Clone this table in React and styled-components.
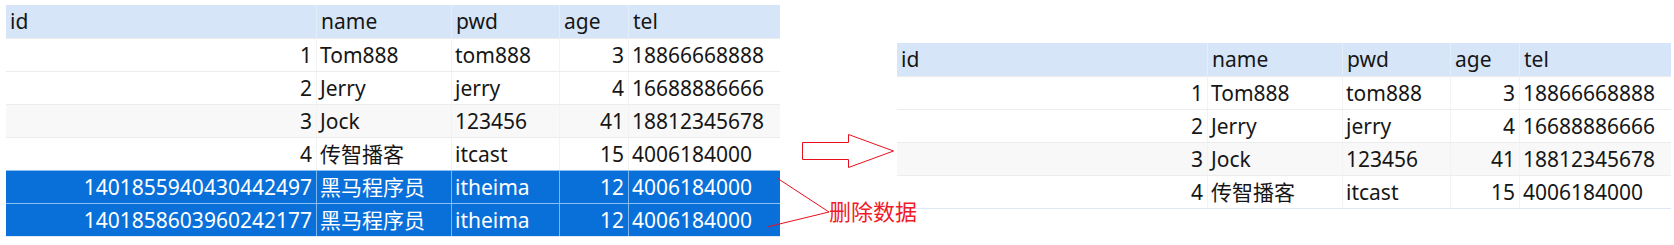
import React from "react";
import styled, { createGlobalStyle } from "styled-components";

const GlobalStyle = createGlobalStyle`
  html, body {
    margin: 0;
    padding: 0;
    background: #ffffff;
  }
  body {
    font-family: "Noto Sans", "Noto Sans CJK SC", sans-serif;
  }
`;

const COLS = [311, 135, 108, 69, 151];
const HEAD = ["id", "name", "pwd", "age", "tel"];
// which columns are right aligned (numbers)
const RIGHT = [true, false, false, true, false];

const baseRows = [
  ["1", "Tom888", "tom888", "3", "18866668888"],
  ["2", "Jerry", "jerry", "4", "16688886666"],
  ["3", "Jock", "123456", "41", "18812345678"],
  ["4", "传智播客", "itcast", "15", "4006184000"],
];

const deletedRows = [
  ["1401855940430442497", "黑马程序员", "itheima", "12", "4006184000"],
  ["1401858603960242177", "黑马程序员", "itheima", "12", "4006184000"],
];

const DataTable = ({ rows, selectedFrom }) => (
  <Table>
    <HeadRow>
      {HEAD.map((h, i) => (
        <HeadCell key={h} $w={COLS[i]}>
          {h}
        </HeadCell>
      ))}
    </HeadRow>
    {rows.map((r, ri) => {
      const selected = selectedFrom != null && ri >= selectedFrom;
      return (
        <Row key={ri} $selected={selected} $shade={ri === 2}>
          {r.map((c, ci) => (
            <Cell
              key={ci}
              $w={COLS[ci]}
              $right={RIGHT[ci]}
              $selected={selected}
            >
              {c}
            </Cell>
          ))}
        </Row>
      );
    })}
  </Table>
);

const App = () => {
  return (
    <>
      <GlobalStyle />
      <Page>
        <DataTable rows={[...baseRows, ...deletedRows]} selectedFrom={4} />
        <Spacer />
        <RightWrap>
          <DataTable rows={baseRows} />
        </RightWrap>

        <Overlay width="1674" height="245" viewBox="0 0 1674 245">
          <polygon
            points="802.5,142.5 848.5,142.5 848.5,134.5 893.5,151 848.5,167.5 848.5,159.5 802.5,159.5"
            fill="none"
            stroke="#e8101c"
            strokeWidth="1"
          />
          <line x1="777" y1="178" x2="829" y2="212" stroke="#e8101c" strokeWidth="1" />
          <line x1="767" y1="227" x2="829" y2="212" stroke="#e8101c" strokeWidth="1" />
        </Overlay>
        <Label>删除数据</Label>
      </Page>
    </>
  );
};

export default App;

// page
const Page = styled.div`
  position: relative;
  width: 1674px;
  height: 245px;
  display: flex;
  align-items: flex-start;
  padding: 5px 0 0 6px;
  box-sizing: border-box;
  overflow: hidden;
`;

const Spacer = styled.div`
  width: 117px;
  flex-shrink: 0;
`;

const RightWrap = styled.div`
  margin-top: 38px;
`;

// table
const Table = styled.div`
  display: flex;
  flex-direction: column;
  border-bottom: 1px solid #dde9f5;
  font-size: 21px;
  color: #161616;
`;

const HeadRow = styled.div`
  display: flex;
  height: 33px;
  background: #d6e6f8;
`;

const HeadCell = styled.div`
  width: ${(p) => p.$w}px;
  box-sizing: border-box;
  padding: 0 4px;
  line-height: 33px;
  border-right: 1px solid #e3eefa;
  white-space: nowrap;
  &:last-child {
    border-right: none;
  }
`;

const Row = styled.div`
  display: flex;
  height: 33px;
  box-sizing: border-box;
  border-top: 1px solid ${(p) => (p.$selected ? "#8cc0f0" : "#ececec")};
  background: ${(p) =>
    p.$selected ? "#0a70d9" : p.$shade ? "#f8f8f8" : "#ffffff"};
  color: ${(p) => (p.$selected ? "#ffffff" : "#161616")};
`;

const Cell = styled.div`
  width: ${(p) => p.$w}px;
  box-sizing: border-box;
  padding: 0 4px 0 3px;
  line-height: 33px;
  text-align: ${(p) => (p.$right ? "right" : "left")};
  border-right: 1px solid ${(p) => (p.$selected ? "#7fb6ec" : "#f3f3f3")};
  white-space: nowrap;
  &:last-child {
    border-right: none;
  }
`;

// annotations drawn over the tables
const Overlay = styled.svg`
  position: absolute;
  left: 0;
  top: 0;
  pointer-events: none;
`;

const Label = styled.div`
  position: absolute;
  left: 829px;
  top: 199px;
  font-family: "Noto Sans CJK SC", sans-serif;
  font-size: 22px;
  line-height: 1;
  color: #f01b29;
`;
